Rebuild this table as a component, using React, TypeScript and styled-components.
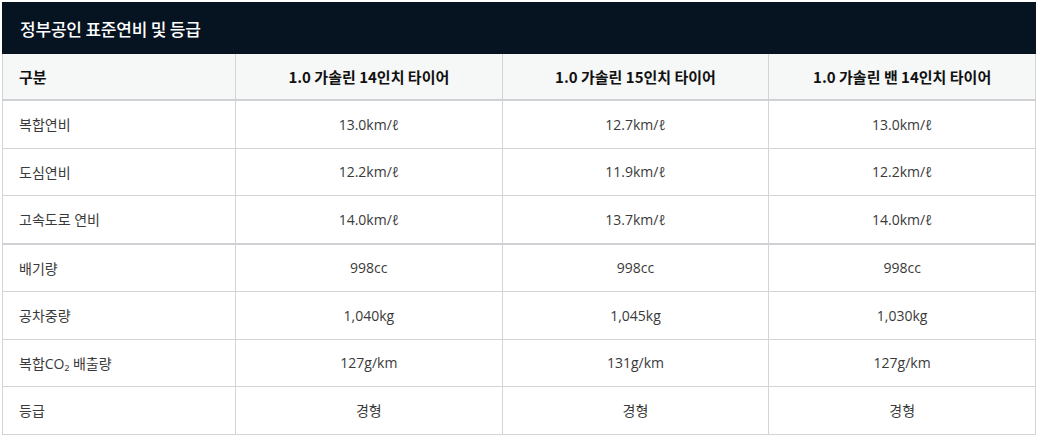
import React from 'react';
import styled, { createGlobalStyle } from 'styled-components';

const GlobalStyle = createGlobalStyle`
  html, body {
    margin: 0;
    padding: 0;
    background: #fff;
  }
  body {
    font-family: "Noto Sans CJK KR", "Noto Sans", sans-serif;
  }
`;

const Wrapper = styled.section`
  padding: 2px 3px 0 2px;
`;

const Title = styled.h2`
  margin: 0;
  height: 52px;
  display: flex;
  align-items: center;
  padding: 0 18px;
  background-color: #061320;
  color: #fff;
  font-size: 17px;
  font-weight: 500;
  letter-spacing: -0.2px;
`;

const Table = styled.table`
  width: 100%;
  border-collapse: collapse;
  table-layout: fixed;
  border-left: 1px solid #d3d4d6;
  border-right: 1px solid #d3d4d6;
`;

const HeadCell = styled.th<{ first?: boolean }>`
  height: 45px;
  padding: 0 16px;
  background-color: #f6f7f7;
  color: #111;
  font-size: 15px;
  font-weight: 700;
  text-align: ${p => (p.first ? 'left' : 'center')};
  border-right: 1px solid #d3d4d6;
  border-bottom: 2px solid #cfd1d4;
`;

const Row = styled.tr<{ divider?: boolean }>`
  border-bottom: ${p => (p.divider ? '2px solid #cfd1d4' : '1px solid #d3d4d6')};
`;

const Cell = styled.td<{ first?: boolean }>`
  height: 46.5px;
  padding: 0 16px;
  color: #3a3a3a;
  font-family: "Open Sans", "Noto Sans CJK KR", sans-serif;
  font-size: 14px;
  text-align: ${p => (p.first ? 'left' : 'center')};
  border-right: 1px solid #d3d4d6;
`;

const columns = ['1.0 가솔린 14인치 타이어', '1.0 가솔린 15인치 타이어', '1.0 가솔린 밴 14인치 타이어'];

const rows: { label: string; values: string[]; divider?: boolean }[] = [
  { label: '복합연비', values: ['13.0km/ℓ', '12.7km/ℓ', '13.0km/ℓ'] },
  { label: '도심연비', values: ['12.2km/ℓ', '11.9km/ℓ', '12.2km/ℓ'] },
  { label: '고속도로 연비', values: ['14.0km/ℓ', '13.7km/ℓ', '14.0km/ℓ'], divider: true },
  { label: '배기량', values: ['998cc', '998cc', '998cc'] },
  { label: '공차중량', values: ['1,040kg', '1,045kg', '1,030kg'] },
  { label: '복합CO₂ 배출량', values: ['127g/km', '131g/km', '127g/km'] },
  { label: '등급', values: ['경형', '경형', '경형'] },
];

const App: React.FC = () => {
  return (
    <>
      <GlobalStyle />
      <Wrapper>
        <Title>정부공인 표준연비 및 등급</Title>
        <Table>
          <colgroup>
            <col style={{ width: 233 }} />
            <col />
            <col />
            <col />
          </colgroup>
          <thead>
            <tr>
              <HeadCell first>구분</HeadCell>
              {columns.map(c => (
                <HeadCell key={c}>{c}</HeadCell>
              ))}
            </tr>
          </thead>
          <tbody>
            {rows.map(r => (
              <Row key={r.label} divider={r.divider}>
                <Cell first>{r.label}</Cell>
                {r.values.map((v, i) => (
                  <Cell key={i}>{v}</Cell>
                ))}
              </Row>
            ))}
          </tbody>
        </Table>
      </Wrapper>
    </>
  );
};

export default App;
